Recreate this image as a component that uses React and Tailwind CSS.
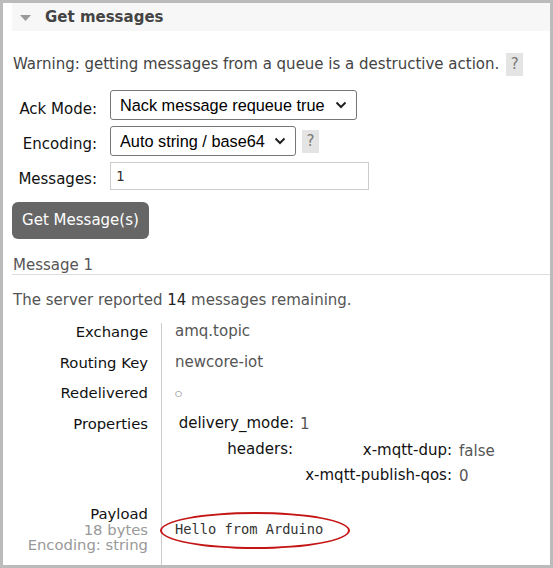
import React from "react";

const sans = { fontFamily: '"DejaVu Sans", Verdana, sans-serif' };
const arial = { fontFamily: '"Liberation Sans", Arial, sans-serif' };
const mono = { fontFamily: '"DejaVu Sans Mono", monospace' };

function Chevron() {
  return (
    <svg width="12" height="8" viewBox="0 0 12 8" className="ml-auto">
      <path d="M1.5 1.5 L6 6 L10.5 1.5" fill="none" stroke="#222" strokeWidth="2" />
    </svg>
  );
}

function Help() {
  return (
    <span className="inline-flex h-[23px] w-[17px] items-center justify-center bg-[#e4e4e4] text-[15px] text-[#777]" style={sans}>
      ?
    </span>
  );
}

function Select({ children, width }) {
  return (
    <div
      className={`flex h-[30px] items-center rounded-[3px] border border-[#767676] bg-white pl-[9px] pr-[9px] text-[16.3px] text-black ${width}`}
      style={arial}
    >
      <span>{children}</span>
      <Chevron />
    </div>
  );
}

export default function App() {
  return (
    <div className="flex h-[568px] w-[553px] flex-col border-[3px] border-[#bbbbbb] bg-white text-[15px] text-[#444]" style={sans}>
      <div className="ml-[9px] flex h-[28px] shrink-0 items-center bg-[#f7f7f7]">
        <svg width="11" height="6" viewBox="0 0 11 6" className="ml-[8px] mt-[1px]">
          <path d="M0 0 L11 0 L5.5 6 Z" fill="#9a9a9a" />
        </svg>
        <span className="ml-[14px] text-[15px] font-bold text-[#444]">Get messages</span>
      </div>

      <div className="ml-[10px] mt-[22px] flex items-center">
        <span>Warning: getting messages from a queue is a destructive action.</span>
        <span className="ml-[7px]"><Help /></span>
      </div>

      <div className="ml-[7px] mt-[14px] grid grid-cols-[87px_auto] gap-x-[13px] gap-y-[6px]">
        <div className="pt-[12px] text-right leading-none text-[#111]">Ack Mode:</div>
        <Select width="w-[247px]">Nack message requeue true</Select>
        <div className="pt-[11px] text-right leading-none text-[#111]">Encoding:</div>
        <div className="flex items-center gap-[6px]">
          <Select width="w-[186px]">Auto string / base64</Select>
          <Help />
        </div>
        <div className="pt-[10px] text-right leading-none text-[#111]">Messages:</div>
        <div className="flex h-[28px] w-[259px] items-start border border-[#cccccc] bg-white pl-[5px] pt-[3px] text-[14px] text-[#333]" style={mono}>
          1
        </div>
      </div>

      <button className="ml-[9px] mt-[12px] flex h-[37px] w-[137px] shrink-0 items-center justify-center rounded-[6px] bg-[#666666] text-[15px] text-white" style={sans}>
        Get Message(s)
      </button>

      <div className="ml-[9px] mt-[17px] border-b border-[#dddddd] pl-[1px] leading-[18px] text-[#555]">Message 1</div>

      <div className="ml-[10px] mt-[16px] leading-[18px] text-[#555]">
        The server reported <span className="text-[#222]">14</span> messages remaining.
      </div>

      <div className="mt-[14px] flex flex-1 leading-[17px]">
        <div className="w-[159px] shrink-0 border-r border-[#cccccc] pr-[13px] text-right text-[14.8px] text-[#111]">
          <div className="h-[31px]">Exchange</div>
          <div className="h-[30px]">Routing Key</div>
          <div className="h-[31px]">Redelivered</div>
          <div className="h-[91px]">Properties</div>
          <div className="leading-[15.5px]">
            <div>Payload</div>
            <div className="text-[#999]">18 bytes</div>
            <div className="text-[#999]">Encoding: string</div>
          </div>
        </div>
        <div className="flex-1 pl-[13px] text-[#555]">
          <div className="h-[31px]">amq.topic</div>
          <div className="h-[30px]">newcore-iot</div>
          <div className="h-[31px] pt-[1px] text-[8px] leading-[17px]">○</div>
          <div className="h-[91px] text-[#111]">
            <div className="grid grid-cols-[119px_auto] gap-x-[6px]">
              <div className="text-right">delivery_mode:</div>
              <div className="pt-[1px] text-[#555]">1</div>
              <div className="mt-[8px] pr-[1px] text-right">headers:</div>
              <div className="mt-[9px]">
                <div className="grid grid-cols-[152px_auto] gap-x-[7px] gap-y-[7px]">
                  <div className="text-right">x-mqtt-dup:</div>
                  <div className="pt-[1px] text-[#555]">false</div>
                  <div className="text-right">x-mqtt-publish-qos:</div>
                  <div className="pt-[1px] text-[#555]">0</div>
                </div>
              </div>
            </div>
          </div>
          <div className="pt-[15px]">
            <div className="relative inline-block text-[13.7px] leading-[17px] text-[#333]" style={mono}>
              Hello from Arduino
              <div className="absolute left-[-15px] top-[-9px] h-[37px] w-[190px] rounded-[50%] border-2 border-[#c41414]" />
            </div>
          </div>
        </div>
      </div>
    </div>
  );
}
